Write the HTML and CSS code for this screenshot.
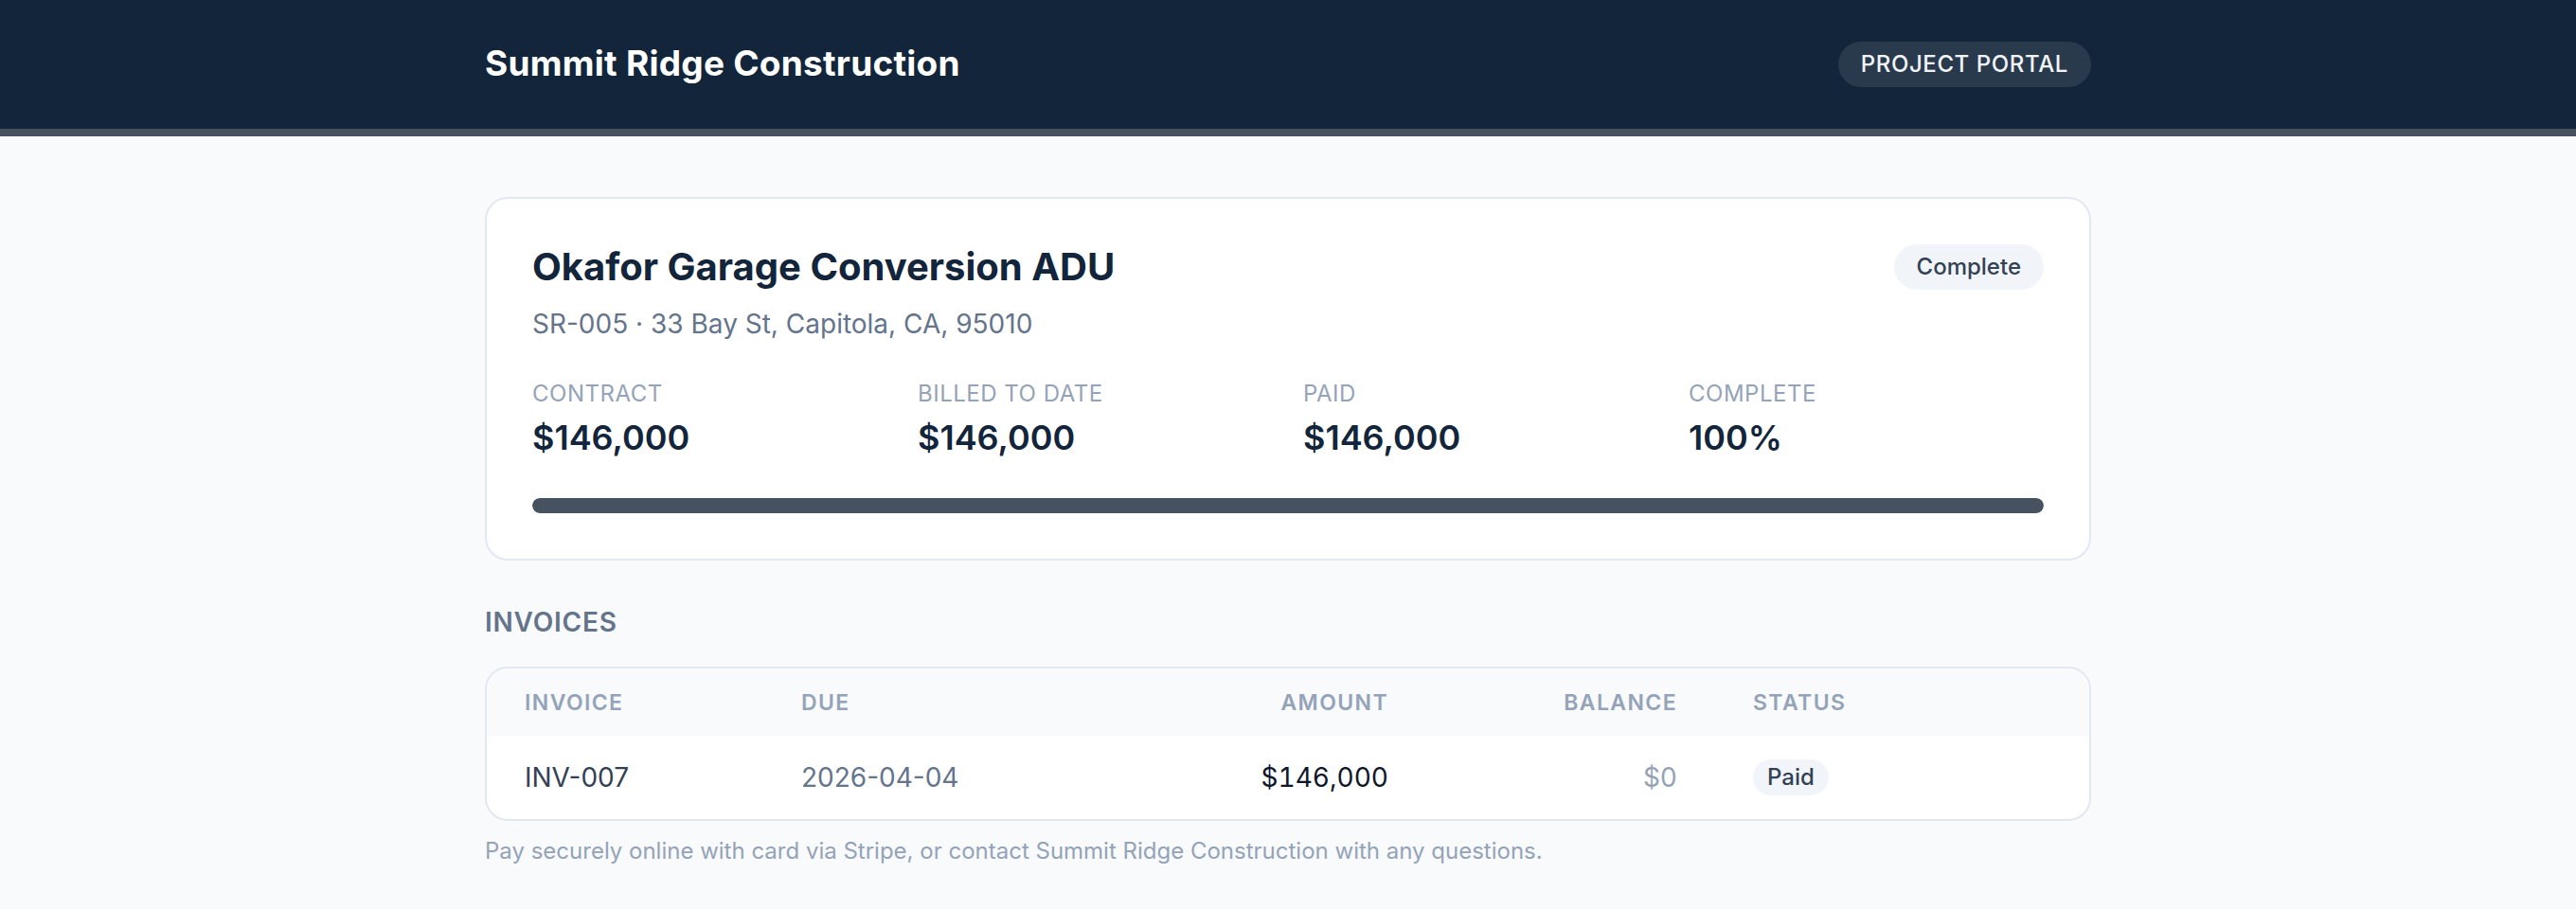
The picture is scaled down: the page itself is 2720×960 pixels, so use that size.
FILE: index.html
```html
<!DOCTYPE html>
<html lang="en">
<head>
<meta charset="utf-8">
<title>Summit Ridge Construction — Project Portal</title>
<link rel="stylesheet" href="styles.css">
</head>
<body>
<header class="topbar">
  <div class="wrap topbar-inner">
    <div class="brand">Summit Ridge Construction</div>
    <div class="portal-pill">PROJECT PORTAL</div>
  </div>
</header>

<main class="wrap page">
  <section class="card project">
    <div class="project-head">
      <div>
        <h1 class="project-title">Okafor Garage Conversion ADU</h1>
        <div class="project-meta">SR-005 · 33 Bay St, Capitola, CA, 95010</div>
      </div>
      <span class="badge">Complete</span>
    </div>

    <div class="stats">
      <div class="stat">
        <div class="stat-label">CONTRACT</div>
        <div class="stat-value">$146,000</div>
      </div>
      <div class="stat">
        <div class="stat-label">BILLED TO DATE</div>
        <div class="stat-value">$146,000</div>
      </div>
      <div class="stat">
        <div class="stat-label">PAID</div>
        <div class="stat-value">$146,000</div>
      </div>
      <div class="stat">
        <div class="stat-label">COMPLETE</div>
        <div class="stat-value">100%</div>
      </div>
    </div>

    <div class="progress"><div class="progress-fill" style="width:100%"></div></div>
  </section>

  <h2 class="section-title">INVOICES</h2>

  <div class="card table-card">
    <table class="invoices">
      <colgroup>
        <col class="c-inv"><col class="c-due"><col class="c-amt"><col class="c-bal"><col class="c-status">
      </colgroup>
      <thead>
        <tr>
          <th>INVOICE</th>
          <th>DUE</th>
          <th class="num">AMOUNT</th>
          <th class="num">BALANCE</th>
          <th>STATUS</th>
        </tr>
      </thead>
      <tbody>
        <tr>
          <td class="inv-no">INV-007</td>
          <td class="due">2026-04-04</td>
          <td class="num amount">$146,000</td>
          <td class="num balance">$0</td>
          <td><span class="badge badge-sm">Paid</span></td>
        </tr>
      </tbody>
    </table>
  </div>

  <p class="note">Pay securely online with card via Stripe, or contact Summit Ridge Construction with any questions.</p>
</main>
</body>
</html>
```

FILE: styles.css
```css
* { box-sizing: border-box; }

html, body {
  margin: 0;
  padding: 0;
}

body {
  background: #f8fafc;
  font-family: Inter, "Noto Sans", "Liberation Sans", sans-serif;
  color: #0f172a;
}

.wrap {
  width: 1696px;
  margin: 0 auto;
}

/* top bar */
.topbar {
  background: #12253a;
  border-bottom: 8px solid #465260;
}

.topbar-inner {
  height: 136px;
  display: flex;
  align-items: center;
  justify-content: space-between;
}

.brand {
  color: #ffffff;
  font-size: 37px;
  font-weight: 700;
  letter-spacing: 0.25px;
  margin-bottom: 3px;
}

.portal-pill {
  background: #2a3a4d;
  color: #f1f5f9;
  font-size: 24px;
  font-weight: 500;
  letter-spacing: 0.6px;
  height: 48px;
  line-height: 48px;
  padding: 0 24px;
  border-radius: 999px;
}

/* page body */
.page {
  padding-top: 64px;
  padding-bottom: 40px;
}

.card {
  background: #ffffff;
  border: 2px solid #e2e8f0;
  border-radius: 24px;
}

.project {
  padding: 48px;
}

.project-head {
  display: flex;
  justify-content: space-between;
  align-items: flex-start;
}

.project-title {
  margin: 0;
  font-size: 40px;
  line-height: 48px;
  font-weight: 700;
  color: #12253a;
}

.project-meta {
  margin-top: 18px;
  font-size: 28px;
  line-height: 36px;
  color: #64748b;
}

.badge {
  display: inline-block;
  background: #f1f5f9;
  color: #334155;
  font-size: 24px;
  font-weight: 500;
  height: 48px;
  line-height: 48px;
  padding: 0 24px;
  border-radius: 999px;
}

.stats {
  margin-top: 40px;
  display: grid;
  grid-template-columns: repeat(4, 1fr);
  column-gap: 32px;
}

.stat-label {
  font-size: 24px;
  line-height: 32px;
  color: #94a3b8;
  letter-spacing: 0.5px;
}

.stat-value {
  margin-top: 8px;
  font-size: 36px;
  line-height: 44px;
  font-weight: 600;
  color: #12253a;
}

.progress {
  margin-top: 42px;
  height: 16px;
  background: #e2e8f0;
  border-radius: 8px;
  overflow: hidden;
}

.progress-fill {
  height: 100%;
  background: #475260;
  border-radius: 8px;
}

/* invoices */
.section-title {
  margin: 48px 0 30px;
  font-size: 28px;
  line-height: 34px;
  font-weight: 600;
  color: #64748b;
  letter-spacing: 0.8px;
}

.table-card {
  overflow: hidden;
}

.invoices {
  width: 100%;
  border-collapse: collapse;
  table-layout: fixed;
}

.c-inv { width: 292px; }
.c-due { width: 350px; }
.c-amt { width: 350px; }
.c-bal { width: 305px; }
.c-status { width: auto; }

.invoices th {
  background: #f8fafc;
  text-align: left;
  font-size: 23px;
  font-weight: 600;
  color: #94a3b8;
  letter-spacing: 1.4px;
  height: 71px;
  padding: 0 40px;
}

.invoices td {
  height: 88px;
  padding: 0 40px;
  font-size: 28px;
  color: #334155;
}

.invoices .num { text-align: right; }

.invoices .due { color: #64748b; }
.invoices .amount {
  color: #0f172a;
  font-variant-numeric: tabular-nums;
}
.invoices .balance {
  color: #94a3b8;
  font-variant-numeric: tabular-nums;
}

.badge-sm {
  height: 38px;
  line-height: 38px;
  padding: 0 15px;
  font-size: 24px;
  font-weight: 500;
}

.note {
  margin: 16px 0 0;
  font-size: 24px;
  line-height: 32px;
  color: #94a3b8;
}
```
